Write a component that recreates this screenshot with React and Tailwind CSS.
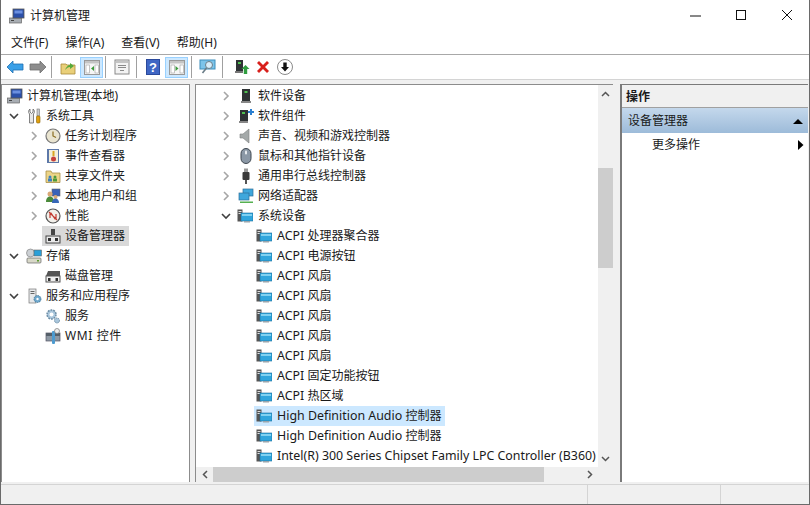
import React from "react";

const Chev = ({ open }) => (
  <svg width="10" height="10" viewBox="0 0 10 10" fill="none" stroke={open ? "#404040" : "#a6a6a6"} strokeWidth="1.6">
    {open ? <path d="M1 3l4 4 4-4" /> : <path d="M3 1l4 4-4 4" />}
  </svg>
);

const Mon = () => (
  <svg width="16" height="16" viewBox="0 0 16 16">
    <rect x="0.5" y="1.5" width="5" height="12" fill="#555" />
    <rect x="1.5" y="3" width="3" height="1" fill="#ddd" />
    <rect x="1.5" y="5" width="3" height="1" fill="#ddd" />
    <rect x="4" y="5" width="12" height="8" fill="#2fa5dc" stroke="#1b6f9e" strokeWidth="0.6" />
    <rect x="5" y="6" width="10" height="2" fill="#7fd0f0" />
    <rect x="7" y="13" width="6" height="1.5" fill="#9aa5ad" />
  </svg>
);

const Computer = () => (
  <svg width="16" height="16" viewBox="0 0 16 16">
    <rect x="0.5" y="10" width="12" height="5" fill="#a8adb3" stroke="#666" strokeWidth="0.7" />
    <rect x="4" y="1" width="11" height="9" fill="#2b4fa8" stroke="#555" strokeWidth="0.8" />
    <rect x="5.5" y="2.5" width="8" height="3" fill="#6b8fe0" />
    <rect x="2" y="12" width="3" height="1" fill="#444" />
  </svg>
);

const Tools = () => (
  <svg width="16" height="16" viewBox="0 0 16 16" fill="none">
    <path d="M4 1v3l1.500 1.500L7 4V1c1.600 1 2 3.400.5 5v9h-4V6C2 4.400 2.400 2 4 1z" fill="#e8e8e8" stroke="#666" strokeWidth="0.8" />
    <rect x="11" y="1" width="2.400" height="7" fill="#c9ccd0" stroke="#777" strokeWidth="0.6" />
    <rect x="10.500" y="8" width="3.500" height="7" rx="1" fill="#e0a010" stroke="#8a6200" strokeWidth="0.6" />
  </svg>
);

const Clock = () => (
  <svg width="16" height="16" viewBox="0 0 16 16" fill="none">
    <circle cx="8" cy="8" r="7" fill="#e9e4d0" stroke="#777" strokeWidth="1.200" />
    <path d="M8 3.500V8l3 1.500" stroke="#8a6d20" strokeWidth="1.200" />
  </svg>
);

const EventLog = () => (
  <svg width="16" height="16" viewBox="0 0 16 16">
    <rect x="2" y="1" width="12" height="14" fill="#5d78a8" />
    <rect x="4" y="2" width="9" height="12" fill="#f3eedb" />
    <rect x="7.500" y="3" width="2" height="5" fill="#d9a520" />
    <circle cx="8.500" cy="11" r="2.500" fill="#c8403a" />
  </svg>
);

const Share = () => (
  <svg width="16" height="16" viewBox="0 0 16 16">
    <path d="M1 3h5l1 2h8v9.500H1z" fill="#ecd488" stroke="#a98f45" strokeWidth="0.8" />
    <circle cx="5" cy="9" r="1.500" fill="#3c7fc0" />
    <rect x="3" y="10.500" width="4" height="3" fill="#3c7fc0" />
    <circle cx="10" cy="9" r="1.500" fill="#4e9a3a" />
    <rect x="8" y="10.500" width="4" height="3" fill="#4e9a3a" />
  </svg>
);

const Users = () => (
  <svg width="16" height="16" viewBox="0 0 16 16">
    <rect x="7" y="1" width="8" height="7" fill="#3a62b8" stroke="#666" strokeWidth="0.6" />
    <circle cx="5" cy="6" r="2.500" fill="#d9a878" />
    <path d="M1 14c0-4 2-5.500 4-5.500S9 10 9 14z" fill="#4a8a3a" />
    <circle cx="10.500" cy="9" r="2" fill="#d9a878" />
    <path d="M7 15c0-3 1.500-4.500 3.500-4.500S14 12 14 15z" fill="#3868b8" />
  </svg>
);

const Perf = () => (
  <svg width="16" height="16" viewBox="0 0 16 16" fill="none">
    <circle cx="8" cy="8" r="7" fill="#f2f0ea" stroke="#555" strokeWidth="1.200" />
    <path d="M4 4l8 8M5 10V5h1l4 6h1V6" stroke="#c23a30" strokeWidth="1.200" />
  </svg>
);

const DevMgr = () => (
  <svg width="16" height="16" viewBox="0 0 16 16">
    <rect x="6" y="1" width="4" height="6" fill="#444" />
    <rect x="1" y="8" width="14" height="7" fill="#eaeaea" stroke="#444" strokeWidth="1" />
    <rect x="3" y="10" width="3" height="3" fill="#333" />
    <rect x="10" y="10" width="3" height="3" fill="#333" />
  </svg>
);

const Storage = () => (
  <svg width="16" height="16" viewBox="0 0 16 16">
    <rect x="1" y="10" width="14" height="5" rx="1" fill="#d8d8c8" stroke="#666" strokeWidth="0.7" />
    <circle cx="4.500" cy="5" r="4" fill="#ccd0d4" stroke="#777" strokeWidth="0.6" />
    <rect x="8" y="2" width="7.500" height="6" fill="#2a9fd8" stroke="#666" strokeWidth="0.6" />
    <rect x="11" y="12" width="2" height="1.500" fill="#5a9a30" />
  </svg>
);

const Disk = () => (
  <svg width="16" height="16" viewBox="0 0 16 16">
    <path d="M3 3h12v5H1z" fill="#555" />
    <rect x="1" y="8" width="14" height="6" fill="#f0f0f0" stroke="#555" strokeWidth="1" />
    <rect x="3" y="10" width="2.500" height="3" fill="#333" />
    <rect x="10.500" y="10" width="2.500" height="3" fill="#333" />
  </svg>
);

const Services = () => (
  <svg width="16" height="16" viewBox="0 0 16 16">
    <rect x="3" y="1" width="7" height="14" fill="#e6e8ea" stroke="#777" strokeWidth="0.7" />
    <rect x="4.500" y="3" width="4" height="1" fill="#666" />
    <rect x="4.500" y="5" width="4" height="1" fill="#666" />
    <circle cx="11.500" cy="11" r="3.500" fill="#6ea7cc" stroke="#3d6f8f" strokeWidth="0.8" strokeDasharray="1.500 0.800" />
    <circle cx="11.500" cy="11" r="1.200" fill="#fff" />
  </svg>
);

const Gears = () => (
  <svg width="16" height="16" viewBox="0 0 16 16" fill="none">
    <circle cx="6.500" cy="6.500" r="4.500" fill="#a9c6dc" stroke="#6d8da5" strokeWidth="1.500" strokeDasharray="1.800 1" />
    <circle cx="6.500" cy="6.500" r="2" fill="#fff" />
    <circle cx="12" cy="12.500" r="2.500" fill="#a9c6dc" stroke="#6d8da5" strokeWidth="1" strokeDasharray="1.300 0.800" />
  </svg>
);

const Wmi = () => (
  <svg width="16" height="16" viewBox="0 0 16 16">
    <rect x="1" y="5" width="14" height="8" fill="#8d98a3" stroke="#556" strokeWidth="0.7" />
    <rect x="1" y="5" width="14" height="3" fill="#555f69" />
    <rect x="7" y="3" width="3" height="13" rx="1" fill="#4d9bd0" />
    <circle cx="12" cy="3" r="2.500" fill="#eee" stroke="#777" strokeWidth="0.7" />
  </svg>
);

const SoftDev = () => (
  <svg width="16" height="16" viewBox="0 0 16 16">
    <rect x="4" y="1" width="8" height="12" fill="#2f3335" />
    <rect x="6.500" y="3" width="3" height="2" fill="#4fc04f" />
    <rect x="3" y="13" width="10" height="2" fill="#888" />
  </svg>
);

const SoftComp = () => (
  <svg width="16" height="16" viewBox="0 0 16 16">
    <rect x="2" y="2" width="8" height="11" fill="#2f3335" />
    <rect x="4" y="4" width="3" height="2" fill="#4fc04f" />
    <rect x="1" y="13" width="9" height="2" fill="#888" />
    <path d="M10 3h2V1h2v2h2v2h-2v2h-2V5h-2z" fill="#2b7fd0" />
  </svg>
);

const Speaker = () => (
  <svg width="16" height="16" viewBox="0 0 16 16">
    <path d="M2 6h3l6-5v14l-6-5H2z" fill="#a4a9a9" stroke="#7c8080" strokeWidth="0.6" />
  </svg>
);

const Mouse = () => (
  <svg width="16" height="16" viewBox="0 0 16 16" fill="none">
    <rect x="3" y="0.500" width="10" height="15" rx="5" fill="#8b98a6" stroke="#3f4750" strokeWidth="1" />
    <rect x="7" y="2.500" width="2" height="4" rx="1" fill="#e8ecf0" />
  </svg>
);

const Usb = () => (
  <svg width="16" height="16" viewBox="0 0 16 16">
    <rect x="6" y="0.500" width="4" height="4" fill="#999" />
    <rect x="4.500" y="4" width="7" height="8" rx="1" fill="#3a3a3a" />
    <rect x="7" y="12" width="2" height="4" fill="#555" />
  </svg>
);

const Net = () => (
  <svg width="16" height="16" viewBox="0 0 16 16">
    <rect x="5" y="1" width="10" height="7" fill="#3fa7dc" stroke="#2d6f9a" strokeWidth="0.7" />
    <rect x="1" y="5" width="10" height="7" fill="#3fa7dc" stroke="#2d6f9a" strokeWidth="0.7" />
    <rect x="2" y="13.500" width="13" height="1.500" fill="#55b050" />
  </svg>
);

const treeL = [
  { chev: null, Icon: Computer, text: "计算机管理(本地)", lvl: 0 },
  { chev: "open", Icon: Tools, text: "系统工具", lvl: 1 },
  { chev: "closed", Icon: Clock, text: "任务计划程序", lvl: 2 },
  { chev: "closed", Icon: EventLog, text: "事件查看器", lvl: 2 },
  { chev: "closed", Icon: Share, text: "共享文件夹", lvl: 2 },
  { chev: "closed", Icon: Users, text: "本地用户和组", lvl: 2 },
  { chev: "closed", Icon: Perf, text: "性能", lvl: 2 },
  { chev: null, Icon: DevMgr, text: "设备管理器", lvl: 2, sel: true },
  { chev: "open", Icon: Storage, text: "存储", lvl: 1 },
  { chev: null, Icon: Disk, text: "磁盘管理", lvl: 2 },
  { chev: "open", Icon: Services, text: "服务和应用程序", lvl: 1 },
  { chev: null, Icon: Gears, text: "服务", lvl: 2 },
  { chev: null, Icon: Wmi, text: "WMI 控件", lvl: 2, wide: true },
];

const devTop = [
  { Icon: SoftDev, text: "软件设备" },
  { Icon: SoftComp, text: "软件组件" },
  { Icon: Speaker, text: "声音、视频和游戏控制器" },
  { Icon: Mouse, text: "鼠标和其他指针设备" },
  { Icon: Usb, text: "通用串行总线控制器" },
  { Icon: Net, text: "网络适配器" },
];

const sysDevs = [
  ["ACPI ", "处理器聚合器"],
  ["ACPI ", "电源按钮"],
  ["ACPI ", "风扇"],
  ["ACPI ", "风扇"],
  ["ACPI ", "风扇"],
  ["ACPI ", "风扇"],
  ["ACPI ", "风扇"],
  ["ACPI ", "固定功能按钮"],
  ["ACPI ", "热区域"],
  ["High Definition Audio ", "控制器"],
  ["High Definition Audio ", "控制器"],
  ["Intel(R) 300 Series Chipset Family LPC Controller (B360)", ""],
];

const Sep = () => <div className="w-px h-[22px] bg-[#a0a0a0]" />;
const Pane = ({ side }) => (
  <svg width="16" height="15" viewBox="0 0 16 15">
    <rect x="0.500" y="0.500" width="15" height="14" fill="#f6f6f6" stroke="#999" />
    <rect x="1" y="1" width="14" height="2.500" fill="#c4c4c4" />
    <rect x="2" y="5" width="3.500" height="8" fill="#fff" stroke="#a0a0a0" strokeWidth="0.6" />
    <rect x="11" y="5" width="3.500" height="8" fill="#fff" stroke="#a0a0a0" strokeWidth="0.6" />
    <path d={side === "left" ? "M10 6v5L7 8.500z" : "M6.500 6v5L9.500 8.500z"} fill="#3c9a3c" />
  </svg>
);

export default function App() {
  return (
    <div
      className="w-[810px] h-[505px] flex flex-col bg-[#f0f0f0] border-l border-r border-b border-[#6a6a6a] text-xs text-[#1a1a1a] overflow-hidden"
      style={{ fontFamily: '"Noto Sans", "Noto Sans CJK SC", sans-serif' }}
    >
      {/* Title bar */}
      <div className="h-8 shrink-0 bg-white flex items-center">
        <div className="ml-[8px]"><Computer /></div>
        <span className="ml-[5px]">计算机管理</span>
        <div className="ml-auto flex items-center mr-[13px] gap-[30px]">
          <svg width="16" height="16" viewBox="0 0 16 16"><path d="M2 8h11" stroke="#111" /></svg>
          <svg width="16" height="16" viewBox="0 0 16 16" fill="none"><rect x="2.500" y="2.500" width="9" height="9" stroke="#111" /></svg>
          <svg width="16" height="16" viewBox="0 0 16 16" fill="none"><path d="M2 2l10 10M12 2L2 12" stroke="#111" /></svg>
        </div>
      </div>
      {/* Menu bar */}
      <div className="h-[22px] shrink-0 bg-white border-b border-[#a8a8a8] flex items-center pl-[10px] gap-[17px] box-content">
        <span>文件(F)</span>
        <span>操作(A)</span>
        <span>查看(V)</span>
        <span>帮助(H)</span>
      </div>
      {/* Toolbar */}
      <div className="h-[24px] shrink-0 bg-white border-b border-[#d4d4d4] flex items-center pl-[5px] box-content">
        <svg width="18" height="14" viewBox="0 0 18 14"><path d="M1 7l6-6v3h10v6H7v3z" fill="#3aa0e8" stroke="#1f6fb0" strokeWidth="0.8" /></svg>
        <svg className="ml-[5px]" width="18" height="14" viewBox="0 0 18 14"><path d="M17 7l-6-6v3H1v6h10v3z" fill="#8d8d8d" stroke="#707070" strokeWidth="0.8" /></svg>
        <div className="ml-[4px]"><Sep /></div>
        <svg className="ml-[8px]" width="16" height="16" viewBox="0 0 16 16"><path d="M1 5h5l1 1h8v9H1z" fill="#e9cf79" stroke="#a88c3a" strokeWidth="0.8" /><path d="M5 11c1-3 3-5 5-5V4l4 3-4 3V8c-2 0-3 1-5 3z" fill="#55a83a" /></svg>
        <div className="ml-[4px] w-[23px] h-[21px] bg-[#cce8ff] border border-[#99d1ff] flex items-center justify-center"><Pane side="left" /></div>
        <div className="ml-[2px]"><Sep /></div>
        <svg className="ml-[8px]" width="16" height="16" viewBox="0 0 16 16" fill="none"><rect x="1" y="1" width="14" height="14" fill="#f3f3f3" stroke="#8a8a8a" /><rect x="2" y="2" width="12" height="2" fill="#c4c4c4" /><path d="M4 6.500h8M4 8.500h8M6 11.500h4" stroke="#8a8a8a" /></svg>
        <div className="ml-[6px]"><Sep /></div>
        <svg className="ml-[9px]" width="14" height="16" viewBox="0 0 14 16"><rect width="14" height="16" fill="#2b4a9c" /><rect x="1" y="1" width="12" height="14" fill="#3f66c4" /><text x="7" y="13" fontSize="13" fontWeight="700" textAnchor="middle" fill="#fff" fontFamily="Liberation Sans">?</text></svg>
        <div className="ml-[5px] w-[23px] h-[21px] bg-[#cce8ff] border border-[#99d1ff] flex items-center justify-center"><Pane side="right" /></div>
        <div className="ml-[3px]"><Sep /></div>
        <svg className="ml-[7px]" width="17" height="16" viewBox="0 0 16 16" fill="none"><rect x="0.500" y="1" width="15" height="9" fill="#7cc4ea" stroke="#3d8ebb" /><circle cx="9.500" cy="6" r="3.500" fill="#d8eefa" stroke="#6a7d88" /><path d="M7 9l-4 5" stroke="#6a7d88" strokeWidth="1.600" /></svg>
        <div className="ml-[6px]"><Sep /></div>
        <svg className="ml-[11px]" width="16" height="16" viewBox="0 0 16 16"><rect x="2" y="1" width="7" height="11" fill="#2f3335" /><rect x="4" y="3" width="3" height="2" fill="#4fc04f" /><rect x="1" y="12" width="8" height="2" fill="#777" /><path d="M11.500 6l4 4h-2.300v5h-3.400v-5H7.500z" fill="#2f9d3f" /></svg>
        <svg className="ml-[5px]" width="16" height="16" viewBox="0 0 16 16"><path d="M2 4l2-2 4 4 4-4 2 2-4 4 4 4-2 2-4-4-4 4-2-2 4-4z" fill="#d8201c" /></svg>
        <svg className="ml-[6px]" width="16" height="16" viewBox="0 0 16 16" fill="none"><circle cx="8" cy="8" r="7.500" fill="#fff" stroke="#8a8a8a" /><path d="M6.300 3.500h3.400v4.500H12L8 12.500 4 8h2.300z" fill="#111" /></svg>
      </div>
      {/* Body */}
      <div className="flex-1 min-h-0 flex pt-[4px] pb-[2px] pr-[1px]">
        {/* Left tree */}
        <div className="w-[189px] shrink-0 bg-white border-t border-r border-l border-[#8c8c8c] pt-px overflow-hidden">
          {treeL.map((r) => (
            <div key={r.text} className={`h-5 flex items-center ${r.lvl === 0 ? "pl-[3px]" : r.lvl === 1 ? "pl-[7px]" : "pl-[27px]"}`}>
              {r.lvl > 0 && (
                <span className={`w-[10px] flex justify-center ${r.lvl === 1 ? "mr-[5px]" : "mr-[3px]"}`}>{r.chev ? <Chev open={r.chev === "open"} /> : null}</span>
              )}
              <div className={`flex items-center h-5 ${r.lvl === 2 ? "pl-[3px]" : "pl-[2px]"} pr-[4px] ${r.sel ? "bg-[#d9d9d9]" : ""}`}>
                <span className="w-4 h-4 shrink-0"><r.Icon /></span>
                <span className={`ml-[4px] ${r.wide ? "tracking-[0.6px]" : ""}`}>{r.text}</span>
              </div>
            </div>
          ))}
        </div>
        {/* Middle */}
        <div className="w-[418px] shrink-0 ml-[5px] bg-white border-t border-l border-[#8c8c8c] flex flex-col overflow-hidden">
          <div className="flex-1 min-h-0 flex">
            <div className="flex-1 min-w-0 pt-px overflow-hidden whitespace-nowrap">
              {devTop.map((r) => (
                <div key={r.text} className="h-5 flex items-center pl-[25px]">
                  <Chev />
                  <span className="ml-[7px] w-4 h-4 shrink-0"><r.Icon /></span>
                  <span className="ml-[4px]">{r.text}</span>
                </div>
              ))}
              <div className="h-5 flex items-center pl-[25px]">
                <Chev open />
                <span className="ml-[6px] w-4 h-4 shrink-0"><Mon /></span>
                <span className="ml-[5px]">系统设备</span>
              </div>
              {sysDevs.map((t, i) => (
                <div key={i} className="h-5 flex items-center pl-[58px]">
                  <div className={`flex items-center h-5 pl-[2px] pr-[4px] ${i === 9 ? "bg-[#cce8ff]" : ""}`}>
                    <span className="w-4 h-4 shrink-0"><Mon /></span>
                    <span className="ml-[5px] whitespace-pre"><span className="text-[12.4px]">{t[0]}</span>{t[1]}</span>
                  </div>
                </div>
              ))}
            </div>
            {/* V scrollbar */}
            <div className="w-[15px] shrink-0 bg-[#f0f0f0] flex flex-col items-center">
              <div className="h-[17px] flex items-center"><svg width="9" height="6" viewBox="0 0 9 6" fill="none"><path d="M1 5l3.500-3.500L8 5" stroke="#555" strokeWidth="1.500" /></svg></div>
              <div className="mt-[66px] w-full h-[100px] bg-[#cdcdcd]" />
              <div className="mt-auto h-[17px] flex items-center"><svg width="9" height="6" viewBox="0 0 9 6" fill="none"><path d="M1 1l3.500 3.500L8 1" stroke="#555" strokeWidth="1.500" /></svg></div>
            </div>
          </div>
          {/* H scrollbar */}
          <div className="h-[15px] shrink-0 bg-[#f0f0f0] flex items-center">
            <div className="w-[17px] flex justify-center"><svg width="6" height="9" viewBox="0 0 6 9" fill="none"><path d="M5 1L1.500 4.500 5 8" stroke="#555" strokeWidth="1.500" /></svg></div>
            <div className="w-[331px] h-full bg-[#cdcdcd]" />
            <div className="ml-[37px] w-[17px] flex justify-center"><svg width="6" height="9" viewBox="0 0 6 9" fill="none"><path d="M1 1l3.500 3.500L1 8" stroke="#555" strokeWidth="1.500" /></svg></div>
          </div>
        </div>
        {/* Right actions */}
        <div className="flex-1 ml-[7px] bg-white border-t border-l-2 border-[#7a7a7a] flex flex-col">
          <div className="h-[23px] bg-[#f0f0f0] border-b border-[#a0a0a0] flex items-center pl-[4px] pt-px font-bold">操作</div>
          <div className="h-[25px] bg-gradient-to-b from-[#c4d8ec] to-[#9dbbd9] flex items-center pl-[6px] pr-[3px] justify-between">
            <span>设备管理器</span>
            <svg className="mr-[2px]" width="10" height="6" viewBox="0 0 10 6"><path d="M0 6l5-5 5 5z" fill="#000" /></svg>
          </div>
          <div className="h-[24px] flex items-center pl-[30px] pr-[4px] justify-between">
            <span>更多操作</span>
            <svg width="6" height="10" viewBox="0 0 6 10"><path d="M0 0l5.500 5L0 10z" fill="#000" /></svg>
          </div>
        </div>
      </div>
      {/* Status bar */}
      <div className="h-[20px] shrink-0 border-t border-[#d4d4d4] flex">
        <div className="w-[587px] border-r border-[#d4d4d4]" />
        <div className="w-[133px] border-r border-[#d4d4d4]" />
      </div>
    </div>
  );
}
